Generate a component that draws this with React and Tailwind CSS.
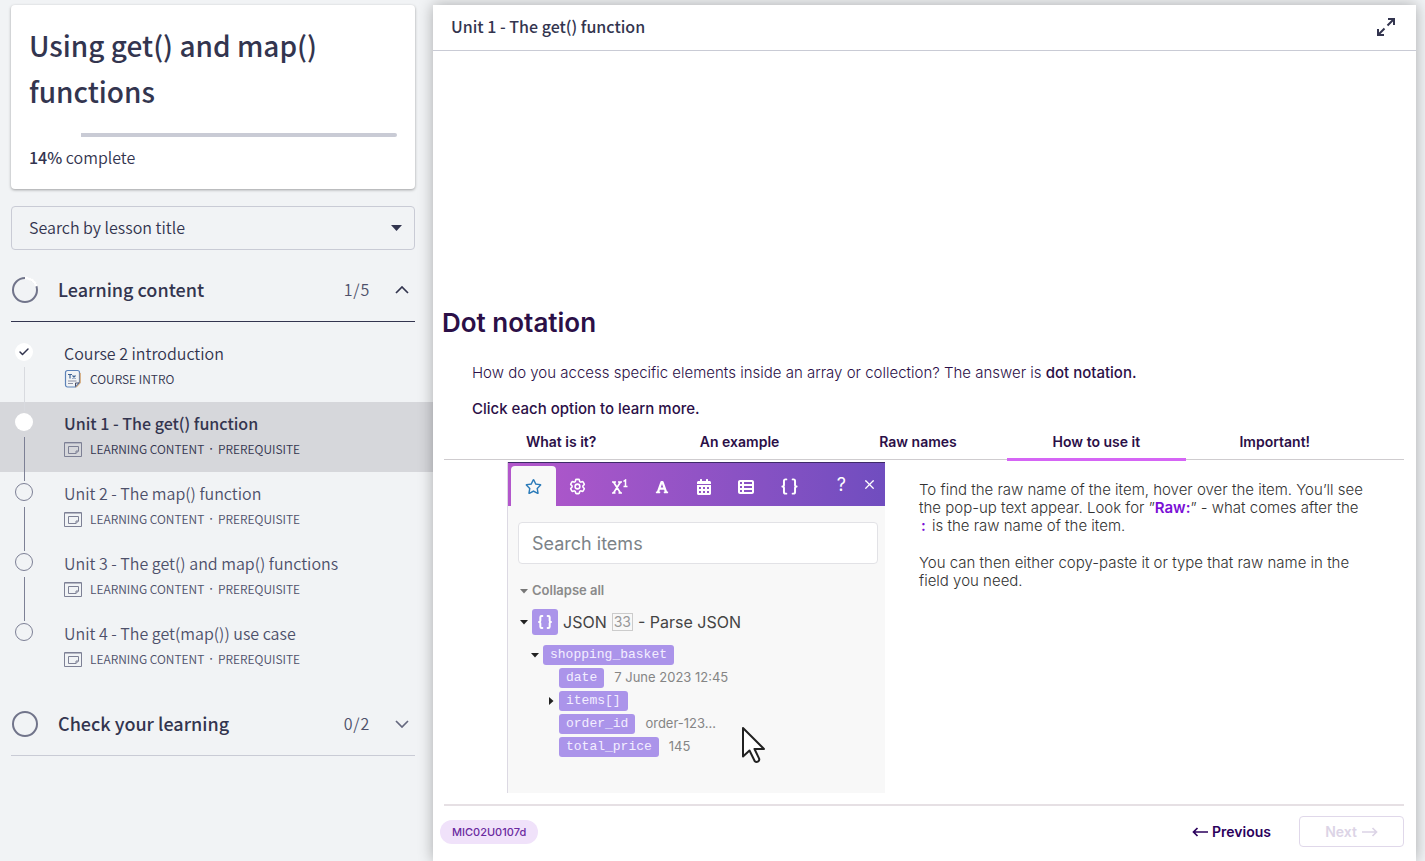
import React from "react";
import { FaRegStar, FaFont, FaCalendarAlt } from "react-icons/fa";
import { FaTableList } from "react-icons/fa6";
import { HiOutlineCog6Tooth } from "react-icons/hi2";
import { Braces, Check, X } from "lucide-react";

const lessons = [
  { title: "Course 2 introduction", meta: ["COURSE INTRO"], state: "done" },
  { title: "Unit 1 - The get() function", meta: ["LEARNING CONTENT", "PREREQUISITE"], state: "current" },
  { title: "Unit 2 - The map() function", meta: ["LEARNING CONTENT", "PREREQUISITE"], state: "todo" },
  { title: "Unit 3 - The get() and map() functions", meta: ["LEARNING CONTENT", "PREREQUISITE"], state: "todo" },
  { title: "Unit 4 - The get(map()) use case", meta: ["LEARNING CONTENT", "PREREQUISITE"], state: "last" },
];

const tabs = ["What is it?", "An example", "Raw names", "How to use it", "Important!"];

function DocIcon() {
  return (
    <svg width="18" height="20" viewBox="0 0 18 20" fill="none" aria-hidden="true">
      <path d="M3.500 1.500h10a2 2 0 0 1 2 2v10l-4 4.500h-8a2 2 0 0 1-2-2v-12.500a2 2 0 0 1 2-2z" stroke="#5d82b8" strokeWidth="1.200" />
      <path d="M16.200 4v10l-4.200 4.500" stroke="#d39a5e" strokeWidth="1" />
      <path d="M11.500 17.500V14H15" stroke="#4a4e68" strokeWidth="1" />
      <path d="M4 5.500h4M6 5.500v4M8.500 6.500l3 3M11.500 6.500l-3 3" stroke="#3f6496" strokeWidth="1.200" />
      <path d="M4 12h8.500M4 14.500h5" stroke="#8a8ea3" strokeWidth="1" />
    </svg>
  );
}

function ModuleIcon() {
  return (
    <svg width="18" height="15" viewBox="0 0 18 15" fill="none" aria-hidden="true">
      <path d="M.5.5h17v14H.5z" stroke="#7d8095" />
      <path d="M1 1.500h16" stroke="#b4b6c2" />
      <path d="M14.500 9V4.500h-10v7h7.500l2.500-2.500H12v2.500" stroke="#7d8095" />
    </svg>
  );
}

function Chevron({ up }) {
  return (
    <svg width="14" height="8" viewBox="0 0 14 8" fill="none" aria-hidden="true">
      <path d={up ? "M1 7l6-6 6 6" : "M1 1l6 6 6-6"} stroke={up ? "#33354f" : "#65687f"} strokeWidth="1.700" />
    </svg>
  );
}

function Arrow({ left }) {
  return (
    <svg width="16" height="10" viewBox="0 0 16 10" fill="none" stroke="currentColor" strokeWidth="1.700" aria-hidden="true">
      <path d={left ? "M16 5H1.500M5.500 1l-4 4 4 4" : "M0 5h14.500M10.500 1l4 4-4 4"} />
    </svg>
  );
}

function Section({ title, count, open, started }) {
  return (
    <button
      type="button"
      aria-expanded={open}
      className={`ml-[11px] flex h-[62px] items-center border-b pb-[2px] text-left ${open ? "border-[#33354f]" : "border-[#c9cbd5]"}`}
    >
      <svg width="28" height="28" viewBox="0 0 28 28" fill="none" aria-hidden="true">
        <circle cx="14" cy="14" r="12" stroke="#71748a" strokeWidth="2" />
        {started && <path d="M14 2a12 12 0 0 1 11.400 8.300" stroke="#fff" strokeWidth="3" />}
      </svg>
      <span className="ml-[19px] flex-1 pb-[2px] text-lg font-medium text-[#33354f]">{title}</span>
      <span className="mr-[25px] pb-px text-base font-[350] tracking-wider text-[#4d506a]">{count}</span>
      <span className="mr-[6px]"><Chevron up={open} /></span>
    </button>
  );
}

function Lesson({ title, meta, state }) {
  const current = state === "current";
  return (
    <li className={`flex h-[70px] ${current ? "bg-[#d6d7db]" : ""}`}>
      <span className="relative z-10 ml-[15px] mt-[11px] flex w-[18px] flex-col items-center gap-[6px]">
        <span
          className={`flex size-[18px] shrink-0 items-center justify-center rounded-full ${
            state === "todo" || state === "last" ? "border border-[#7d8095]" : "bg-white"
          }`}
        >
          {state === "done" && <Check size={12} strokeWidth={3} color="#33354f" />}
        </span>
        {state !== "last" && (
          <span className={`h-11 w-px shrink-0 ${state === "done" ? "bg-[#d8dadf]" : "bg-[#7d8095]"}`} />
        )}
      </span>
      <a
        href="#lesson"
        aria-current={current ? "page" : undefined}
        className={`ml-[31px] mt-[9px] block ${current || state === "done" ? "text-[#33354f]" : "text-[#4d506a]"}`}
      >
        <span className={`block text-base leading-6 ${current ? "font-medium" : "font-[350]"}`}>{title}</span>
        <span className="mt-[4px] flex h-5 items-center gap-[8px] text-xs font-[350] leading-5">
          <span className="flex w-[18px] justify-center">{state === "done" ? <DocIcon /> : <ModuleIcon />}</span>
          <span className="flex gap-[5px]">
            <span>{meta[0]}</span>
            {meta[1] && (
              <>
                <span className="font-['Inter',sans-serif] font-medium">·</span>
                <span>{meta[1]}</span>
              </>
            )}
          </span>
        </span>
      </a>
    </li>
  );
}

function Sidebar() {
  return (
    <aside className="flex w-[433px] shrink-0 flex-col pt-[5px]">
      <div className="ml-[11px] mr-[18px] rounded bg-white px-[18px] pb-[18px] pt-[17px] shadow-[0_1px_3px_rgba(0,0,0,0.35)]">
        <h1 className="text-[28px] font-medium leading-[46px] text-[#33354f]">Using get() and map() functions</h1>
        <div
          className="mt-[19px] flex h-1 justify-end overflow-hidden rounded-full"
          role="progressbar"
          aria-label="Course progress"
          aria-valuenow={14}
          aria-valuemin={0}
          aria-valuemax={100}
        >
          <div className="w-[86%] bg-[#c9cbd5]" />
        </div>
        <p className="mt-[6px] text-base font-[350] leading-7 text-[#33354f]">
          <span className="font-medium">14%</span> complete
        </p>
      </div>
      <div className="relative ml-[11px] mr-[18px] mt-[17px]">
        <select
          id="lesson-search"
          aria-label="Search by lesson title"
          className="block h-11 w-full appearance-none rounded border border-[#c9cbd5] bg-transparent px-[17px] pb-[3px] text-base font-[350] text-[#33354f]"
        >
          <option>Search by lesson title</option>
        </select>
        <svg className="pointer-events-none absolute right-[13px] top-[19px]" width="11" height="6" viewBox="0 0 11 6" aria-hidden="true">
          <path d="M0 0h11L5.500 6z" fill="#33354f" />
        </svg>
      </div>
      <nav className="mt-[10px] flex flex-col" aria-label="Lessons">
        <div className="mr-[18px] flex flex-col">
          <Section title="Learning content" count="1/5" open started />
        </div>
        <ul className="mt-[10px]">
          {lessons.map((l) => (
            <Lesson key={l.title} {...l} />
          ))}
        </ul>
        <div className="mr-[18px] mt-[12px] flex flex-col">
          <Section title="Check your learning" count="0/2" open={false} />
        </div>
      </nav>
    </aside>
  );
}

function Key({ children }) {
  return (
    <span className="flex h-[20px] items-center rounded-[3px] bg-[#ab94ea] px-[7px] font-['Liberation_Mono',monospace] text-[13px] leading-4 text-[#f3eeff]">
      {children}
    </span>
  );
}

function Caret({ right, color = "#222" }) {
  return (
    <svg width="8" height="8" viewBox="0 0 8 8" aria-hidden="true" className="shrink-0">
      <path d={right ? "M2 0l4.500 4L2 8z" : "M0 2h8L4 6.500z"} fill={color} />
    </svg>
  );
}

function ItemPicker() {
  return (
    <div className="h-[331px] w-[378px] shrink-0 border-l border-[#dcd9e3] bg-[#f8f8f8]">
      <div className="flex h-[44px] border-t border-[#3d2a68] bg-linear-to-r from-[#b357cb] to-[#704dbf] pl-[3px] text-white">
        <button type="button" aria-label="Favourites" className="mt-[3px] flex w-[45px] items-center justify-center rounded-t bg-[#f8f8f8] text-[#2b7bb9]">
          <FaRegStar size={17} />
        </button>
        <div className="flex flex-1 items-center pt-[4px]">
          <button type="button" aria-label="General" className="flex w-[42px] justify-center"><HiOutlineCog6Tooth size={19} strokeWidth={2} /></button>
          <button type="button" aria-label="Math" className="flex w-[43px] justify-center">
            <svg width="18" height="16" viewBox="0 0 18 16" fill="none" stroke="#fff" aria-hidden="true">
              <path d="M1 3h4M7 3h4M1 14h3.500M7.500 14H11M2.500 3l7 11M9.500 3l-7 11" strokeWidth="1.700" />
              <path d="M12.500 2.500L14.500 1v6M12.500 7.500h4" strokeWidth="1.500" />
            </svg>
          </button>
          <button type="button" aria-label="Text" className="flex w-[42px] justify-center"><FaFont size={14} /></button>
          <button type="button" aria-label="Date" className="flex w-[42px] justify-center"><FaCalendarAlt size={16} /></button>
          <button type="button" aria-label="Array" className="flex w-[42px] justify-center"><FaTableList size={16} /></button>
          <button type="button" aria-label="Variables" className="flex w-[44px] justify-center"><Braces size={19} strokeWidth={2.5} /></button>
          <button type="button" aria-label="Help" className="ml-auto pb-[4px] font-['Inter',sans-serif] text-lg leading-5">?</button>
          <button type="button" aria-label="Close" className="ml-[16px] mr-[8px] pb-[4px]"><X size={15} /></button>
        </div>
      </div>
      <div className="px-[10px] pt-[16px]">
        <input
          aria-label="Search items"
          placeholder="Search items"
          className="block h-[42px] w-[360px] rounded border border-[#e2e2e6] bg-white px-[13px] text-lg placeholder:text-[#7c8388]"
        />
      </div>
      <div className="mt-[17px] flex h-5 items-center gap-[4px] pl-[12px] text-[13px] font-semibold text-[#8a8a8a]">
        <Caret color="#777" />
        Collapse all
      </div>
      <div className="mt-[8px] flex h-[26px] items-center pl-[12px] text-base text-[#444]">
        <Caret />
        <span className="ml-[4px] mr-[5px] flex size-[26px] items-center justify-center rounded-[3px] bg-[#ab94ea] text-white">
          <Braces size={16} strokeWidth={3} />
        </span>
        JSON
        <span className="mx-[5px] border border-[#ccc] px-px text-sm leading-4 text-[#999]">33</span>
        - Parse JSON
      </div>
      <div className="mt-[10px] flex flex-col gap-[3px] text-[13px] text-[#858585]">
        <div className="flex items-center gap-[4px] pl-[23px]"><Caret /><Key>shopping_basket</Key></div>
        <div className="flex items-center gap-[10px] pl-[51px]"><Key>date</Key>7 June 2023 12:45</div>
        <div className="flex items-center gap-[4px] pl-[39px]"><Caret right /><Key>items[]</Key></div>
        <div className="relative flex items-center gap-[10px] pl-[51px]">
          <Key>order_id</Key>order-123...
          <svg className="absolute left-[233px] top-[12px]" width="26" height="38" viewBox="0 0 26 38" aria-hidden="true">
            <path d="M2 2v28.500l6.500-6 5.300 10.700q1.500 1.300 3.400.2 1.600-1.200.8-3L13.500 23H23z" fill="#fff" stroke="#222" strokeWidth="2" strokeLinejoin="round" />
          </svg>
        </div>
        <div className="flex items-center gap-[10px] pl-[51px]"><Key>total_price</Key>145</div>
      </div>
    </div>
  );
}

export default function App() {
  return (
    <div className="flex min-h-screen bg-[#f1f3f5] font-['Noto_Sans_CJK_SC',sans-serif]">
      <Sidebar />
      <main className="relative mr-[9px] mt-[5px] flex min-w-0 flex-1 flex-col bg-white shadow-[0_0_14px_rgba(0,0,0,0.3)]">
        <header className="flex h-[46px] items-center justify-between border-b border-[#c9cbd5] pb-[2px] pl-[18px] pr-[20px]">
          <h2 className="pb-px text-base font-medium text-[#33354f]">Unit 1 - The get() function</h2>
          <button type="button" aria-label="Expand">
            <svg width="20" height="20" viewBox="0 0 20 20" fill="none" stroke="#33354f" strokeWidth="2" aria-hidden="true">
              <path d="M12 2h6v6M18 2l-6.500 6.500M8 18H2v-6M2 18l6.500-6.500" />
            </svg>
          </button>
        </header>
        <div className="mt-[256px] flex flex-col pl-[11px] pr-[12px] font-['Inter',sans-serif] text-[#2b0f47]">
          <h3 className="-ml-[2px] text-[26px] font-semibold leading-8">Dot notation</h3>
          <div className="ml-[28px] mt-[22px] flex flex-col gap-[12px] text-[15px] leading-6">
            <p className="font-light">
              How do you access specific elements inside an array or collection? The answer is{" "}
              <strong className="font-medium">dot notation.</strong>
            </p>
            <p className="font-medium">Click each option to learn more.</p>
          </div>
          <div role="tablist" className="mt-[5px] grid h-[34px] grid-cols-5 border-b border-[#cfcccf] pl-[28px] pr-[40px]">
            {tabs.map((t) => (
              <button
                key={t}
                type="button"
                role="tab"
                aria-selected={t === "How to use it"}
                className={`-mb-[2px] border-b-[3px] text-sm font-semibold ${
                  t === "How to use it" ? "border-[#d565f5]" : "border-transparent"
                }`}
              >
                {t}
              </button>
            ))}
          </div>
          <div role="tabpanel" className="mt-[2px] flex gap-[34px] pl-[63px] pr-[38px]">
            <ItemPicker />
            <div className="flex-1 pt-[19px] text-[15px] font-light leading-[18px] text-[#333]">
              <p>
                To find the raw name of the item, hover over the item. You’ll see the pop-up text appear. Look for ”
                <strong className="font-semibold text-[#7a0fd6]">Raw:</strong>” - what comes after the{" "}
                <strong className="px-[2px] font-semibold text-[#7a0fd6]">:</strong> is the raw name of the item.
              </p>
              <p className="mt-[19px]">
                You can then either copy-paste it or type that raw name in the field you need.
              </p>
            </div>
          </div>
          <div className="mt-[11px] border-t-2 border-[#e6e0e4]" />
          <footer className="flex items-center justify-between pt-[10px]">
            <span className="-ml-[4px] rounded-full bg-[#f0e2fa] px-[12px] text-[11px] font-medium leading-6 text-[#6b2aa0]">
              MIC02U0107d
            </span>
            <div className="flex items-center gap-[28px] text-sm font-semibold">
              <button type="button" className="flex items-center gap-[4px] text-[#2b005c]">
                <Arrow left />
                Previous
              </button>
              <button type="button" disabled className="flex h-[31px] w-[105px] items-center justify-center gap-[5px] rounded border border-[#e0d8ea] text-[#dcd4e6]">
                Next
                <Arrow />
              </button>
            </div>
          </footer>
        </div>
      </main>
    </div>
  );
}
